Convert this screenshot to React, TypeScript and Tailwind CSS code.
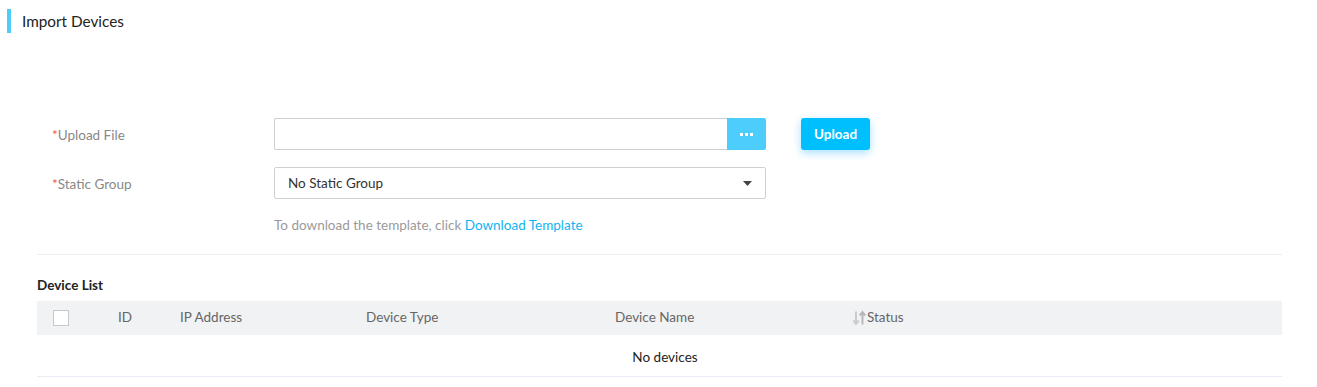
import React from "react";

export default function App() {
  return (
    <div className="w-[1317px] h-[387px] bg-white text-[#333] overflow-hidden" style={{ fontFamily: "Lato, 'Noto Sans', sans-serif" }}>
      <div className="pt-[9px] pl-[7px] flex items-center">
        <div className="w-[4px] h-[24px] bg-[#4ccdf7]" />
        <div className="ml-[11px] text-[15.3px] text-[#222]">Import Devices</div>
      </div>

      <div className="mt-[85px] pl-[52px] flex flex-col">
        <div className="flex items-center h-[32px]">
          <div className="w-[222px] text-[13.5px] text-[#888] pt-[2px]"><span className="text-[#e8565a]">*</span>Upload File</div>
          <div className="flex w-[492px] h-[32px]">
            <div className="flex-1 border border-[#cfcfd4] rounded-l-[2px] border-r-0" />
            <div className="w-[39px] bg-[#4ccdfb] rounded-r-[2px] flex items-center justify-center gap-[2px]">
              <span className="w-[3px] h-[3px] bg-white" />
              <span className="w-[3px] h-[3px] bg-white" />
              <span className="w-[3px] h-[3px] bg-white" />
            </div>
          </div>
          <button className="ml-[35px] w-[69px] h-[32px] bg-[#00bfff] rounded-[3px] text-white text-[13.5px] font-bold shadow-[0_3px_8px_rgba(0,170,255,0.35)] pt-[1px]">Upload</button>
        </div>
        <div className="flex items-center h-[32px] mt-[17px]">
          <div className="w-[222px] text-[13.5px] text-[#888] pt-[2px]"><span className="text-[#e8565a]">*</span>Static Group</div>
          <div className="w-[492px] h-[32px] border border-[#cfcfd4] rounded-[2px] flex items-center justify-between pl-[13px] pr-[13px]">
            <span className="text-[13.5px] text-[#333] pt-[1px]">No Static Group</span>
            <svg width="9" height="5" viewBox="0 0 9 5"><path d="M0 0h9L4.5 5z" fill="#444" /></svg>
          </div>
        </div>
        <div className="ml-[222px] mt-[16px] text-[13.5px] text-[#9a9a9a]">
          To download the template, click <span className="text-[#10b4f0]">Download Template</span>
        </div>
      </div>

      <div className="mx-[37px] w-[1245px]">
        <div className="mt-[19px] border-t border-[#eeeeee]" />
        <div className="mt-[20px] text-[13.5px] font-bold text-[#222]">Device List</div>
        <div className="mt-[5px] h-[34px] bg-[#f1f2f4] flex items-center text-[13.5px] text-[#666]">
          <div className="w-[16px] h-[16px] ml-[16px] border border-[#c9c9c9] bg-white" />
          <div className="ml-[49px] w-[62px]">ID</div>
          <div className="w-[186px]">IP Address</div>
          <div className="w-[249px]">Device Type</div>
          <div className="w-[237px]">Device Name</div>
          <div className="flex items-center">
            <svg width="15" height="16" viewBox="0 0 15 16">
              <path d="M4 1.5v12M1.3 10.5L4 13.8L6.7 10.5" stroke="#cccccc" strokeWidth="2" fill="none" />
              <path d="M10.5 14.5V2.5M7.8 5.5L10.5 2.2L13.2 5.5" stroke="#b8b8b8" strokeWidth="2" fill="none" />
            </svg>
            <span>Status</span>
          </div>
        </div>
        <div className="h-[42px] border-b border-[#ecebf5] flex items-center justify-center text-[13.5px] text-[#222] pl-[11px] pt-[4px]">No devices</div>
      </div>
    </div>
  );
}
